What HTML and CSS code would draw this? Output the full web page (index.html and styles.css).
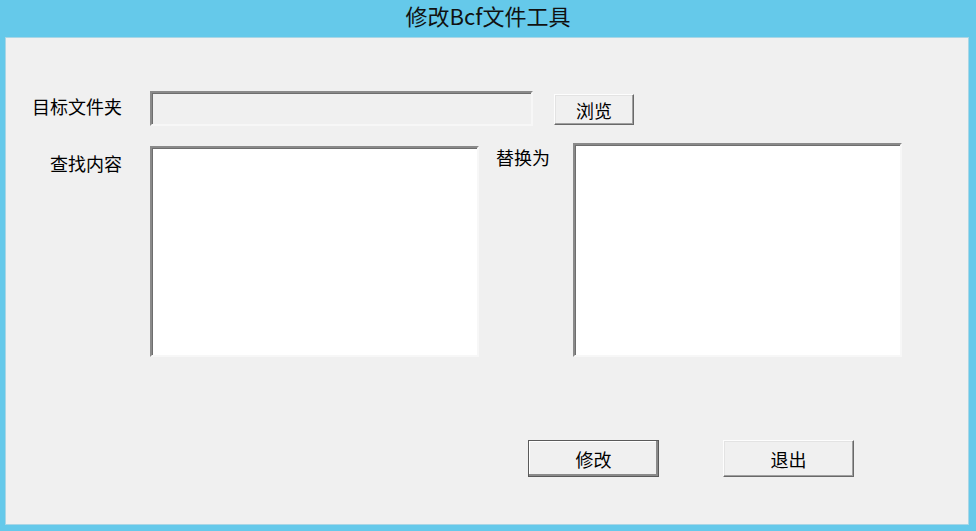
FILE: index.html
```html
<!DOCTYPE html>
<html lang="zh-CN">
<head>
<meta charset="utf-8" />
<title>修改Bcf文件工具</title>
<link rel="stylesheet" href="styles.css">
</head>
<body>
<div class="window">
  <div class="titlebar">修改Bcf文件工具</div>
  <div class="client">
    <div class="row row-folder">
      <label class="lbl">目标文件夹</label>
      <div class="field field-folder"></div>
      <button class="btn btn-browse">浏览</button>
    </div>
    <div class="row row-text">
      <label class="lbl lbl-find">查找内容</label>
      <div class="field area area-find"></div>
      <label class="lbl-replace">替换为</label>
      <div class="field area area-replace"></div>
    </div>
    <div class="row row-actions">
      <button class="btn btn-action btn-default">修改</button>
      <button class="btn btn-action">退出</button>
    </div>
  </div>
</div>
</body>
</html>
```

FILE: styles.css
```css
*{box-sizing:border-box;}
body{
  margin:0;
  background:#65c9ea;
  font-family:"Noto Sans CJK SC","Noto Sans",sans-serif;
  color:#000;
}
.window{width:976px;height:531px;display:flex;flex-direction:column;}
.titlebar{
  height:37px;
  text-align:center;
  font-size:22px;
  line-height:31px;
  color:#111;
}
.client{
  margin:0 7px 0 5px;
  height:488px;
  background:#f0f0f0;
  border:1px solid #a9d6e6;
  padding-top:53px;
}
.row{display:flex;}
.lbl{
  width:116px;
  text-align:right;
  font-size:18px;
  flex:none;
}
.row-folder{align-items:center;height:35px;}
.row-folder .lbl{margin-top:-5px;}
.field{
  border-style:solid;
  border-width:2px;
  border-color:#8a8a8a #f7f7f7 #f7f7f7 #8a8a8a;
  box-shadow:inset 1px 1px #6e6e6e;
  flex:none;
}
.field-folder{width:383px;height:35px;margin-left:28px;background:#f0f0f0;}
.btn{
  font-family:inherit;
  font-size:18px;
  background:#f0f0f0;
  color:#000;
  border:1px solid;
  border-color:#fdfdfd #696969 #696969 #fdfdfd;
  box-shadow:inset -1px -1px #a0a0a0,inset 1px 1px #e3e3e3;
  padding:0;
  line-height:1;
}
.btn-browse{width:80px;height:31px;margin-left:21px;margin-top:2px;}
.row-text{margin-top:17px;align-items:flex-start;}
.lbl-find{margin-top:7px;}
.area{background:#fff;height:211px;}
.area-find{width:329px;margin-left:28px;margin-top:3px;}
.lbl-replace{font-size:18px;width:94px;padding-left:17px;margin-top:1px;flex:none;}
.area-replace{width:329px;height:214px;}
.row-actions{margin-top:83px;padding-left:522px;gap:64px;}
.btn-action{width:131px;height:37px;}
.btn-default{
  border-color:#5a5a5a;
  box-shadow:inset -2px -2px #8a8a8a,inset 1px 1px #fff;
}
```
